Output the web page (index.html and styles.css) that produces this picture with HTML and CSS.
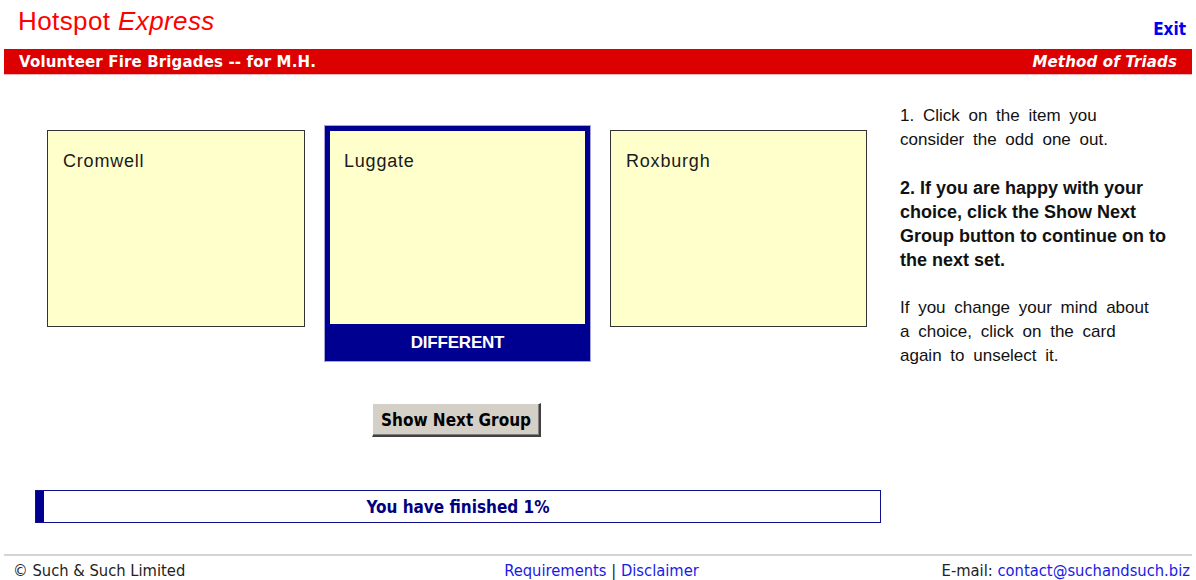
FILE: index.html
```html
<!DOCTYPE html>
<html lang="en">
<head>
<meta charset="utf-8">
<title>Hotspot Express - Method of Triads</title>
<link rel="stylesheet" href="styles.css">
</head>
<body>
<header class="top">
  <h1 class="brand">Hotspot <em>Express</em></h1>
  <a class="exit" href="#">Exit</a>
</header>

<div class="titlebar">
  <span class="survey">Volunteer Fire Brigades -- for M.H.</span>
  <span class="method">Method of Triads</span>
</div>

<main class="main">
  <section class="board">
    <div class="cards">
      <div class="card"><span class="card-name">Cromwell</span></div>
      <div class="card-selected">
        <div class="card-face"><span class="card-name">Luggate</span></div>
        <div class="card-label">DIFFERENT</div>
      </div>
      <div class="card"><span class="card-name">Roxburgh</span></div>
    </div>

    <button class="next-btn" type="button">Show Next Group</button>

    <div class="progress">
      <div class="progress-fill" style="width: 1%"></div>
      <span class="progress-text">You have finished 1%</span>
    </div>
  </section>

  <aside class="help">
    <p class="help-step">1. Click on the item you<br>consider the odd one out.</p>
    <p class="help-step help-strong">2. If you are happy with your<br>choice, click the Show Next<br>Group button to continue on to<br>the next set.</p>
    <p class="help-step">If you change your mind about<br>a choice, click on the card<br>again to unselect it.</p>
  </aside>
</main>

<footer class="foot">
  <span class="copy">&copy; Such &amp; Such Limited</span>
  <span class="links"><a href="#">Requirements</a> | <a href="#">Disclaimer</a></span>
  <span class="mail">E-mail: <a href="#">contact@suchandsuch.biz</a></span>
</footer>
</body>
</html>
```

FILE: styles.css
```css
html, body {
  margin: 0;
  padding: 0;
  background: #ffffff;
}

body {
  width: 1196px;
  height: 580px;
  overflow: hidden;
  font-family: "Liberation Sans", Arial, sans-serif;
  color: #111111;
}

/* ---- top heading ---- */
.top {
  display: flex;
  justify-content: space-between;
  align-items: flex-start;
  height: 49px;
  box-sizing: border-box;
  padding: 6px 10px 0 18px;
}

.brand {
  margin: 0;
  font-family: "Liberation Sans", Arial, sans-serif;
  font-weight: normal;
  font-size: 26px;
  line-height: 30px;
  color: #ff0000;
  letter-spacing: 0.4px;
}

.brand em {
  font-style: italic;
}

.exit {
  margin-top: 13px;
  font-family: "DejaVu Sans Condensed", "DejaVu Sans", sans-serif;
  font-stretch: condensed;
  font-weight: bold;
  font-size: 17px;
  line-height: 20px;
  color: #0000ee;
  text-decoration: none;
}

/* ---- red title bar ---- */
.titlebar {
  display: flex;
  justify-content: space-between;
  align-items: center;
  height: 25px;
  margin: 0 4px;
  padding: 0 15px;
  background: #dc0000;
  border-bottom: 1px solid #f2b4b4;
  color: #ffffff;
  font-family: "DejaVu Sans", Verdana, sans-serif;
  font-weight: bold;
  font-size: 15px;
  letter-spacing: 0.15px;
}

.method {
  font-style: italic;
}

/* ---- main area ---- */
.main {
  display: flex;
  padding-left: 35px;
}

.board {
  width: 846px;
  display: flex;
  flex-direction: column;
  align-items: center;
  padding-top: 50px;
}

.cards {
  display: flex;
  align-items: flex-start;
  gap: 19px;
  margin-right: 2px;
}

.card {
  box-sizing: border-box;
  width: 258px;
  height: 197px;
  margin-top: 5px;
  padding: 19px 15px;
  background: #ffffcc;
  border: 1px solid #333333;
}

.card:last-child {
  width: 257px;
}

.card-name {
  font-size: 18px;
  line-height: 22px;
  letter-spacing: 0.8px;
  color: #1a1a1a;
}

.card-selected {
  box-sizing: border-box;
  width: 267px;
  padding: 5px 5px 0;
  background: #000090;
  border: 1px solid #a4a4d6;
}

.card-face {
  height: 193px;
  box-sizing: border-box;
  padding: 19px 14px;
  background: #ffffcc;
}

.card-label {
  height: 37px;
  display: flex;
  align-items: center;
  justify-content: center;
  color: #ffffff;
  font-family: "Liberation Sans", Arial, sans-serif;
  font-weight: bold;
  font-size: 17px;
  letter-spacing: -0.2px;
}

.next-btn {
  margin-top: 41px;
  margin-right: 3px;
  width: 169px;
  height: 34px;
  padding: 0;
  background: #d4d0c8;
  border-style: solid;
  border-width: 1px 2px 2px 1px;
  border-color: #ffffff #404040 #404040 #ffffff;
  box-shadow: inset -1px -1px 0 #808080;
  font-family: "DejaVu Sans Condensed", "DejaVu Sans", sans-serif;
  font-stretch: condensed;
  font-weight: bold;
  font-size: 17px;
  color: #000000;
}

.progress {
  position: relative;
  box-sizing: border-box;
  width: 846px;
  height: 33px;
  margin-top: 53px;
  border: 1px solid #10108c;
  display: flex;
  align-items: center;
  justify-content: center;
}

.progress-fill {
  position: absolute;
  left: 0;
  top: 0;
  bottom: 0;
  background: #000090;
}

.progress-text {
  font-family: "DejaVu Sans Condensed", "DejaVu Sans", sans-serif;
  font-stretch: condensed;
  font-weight: bold;
  font-size: 17px;
  color: #000080;
}

/* ---- instructions ---- */
.help {
  margin-left: 19px;
  padding-top: 29px;
  white-space: nowrap;
}

.help-step {
  margin: 0 0 24px;
  font-size: 17px;
  line-height: 24px;
  word-spacing: 4px;
  color: #111111;
}

.help-strong {
  font-weight: bold;
  font-size: 18px;
  word-spacing: 0;
}

/* ---- footer ---- */
.foot {
  display: grid;
  grid-template-columns: 1fr auto 1fr;
  margin: 31px 4px 0;
  padding: 5px 2px 0 9px;
  border-top: 2px solid #d4d4d4;
  font-family: "DejaVu Sans Condensed", "DejaVu Sans", sans-serif;
  font-stretch: condensed;
  font-size: 16.4px;
  line-height: 20px;
  color: #222222;
}

.foot a {
  color: #1a1ae6;
  text-decoration: none;
}

.links {
  text-align: center;
}

.mail {
  text-align: right;
}
```
